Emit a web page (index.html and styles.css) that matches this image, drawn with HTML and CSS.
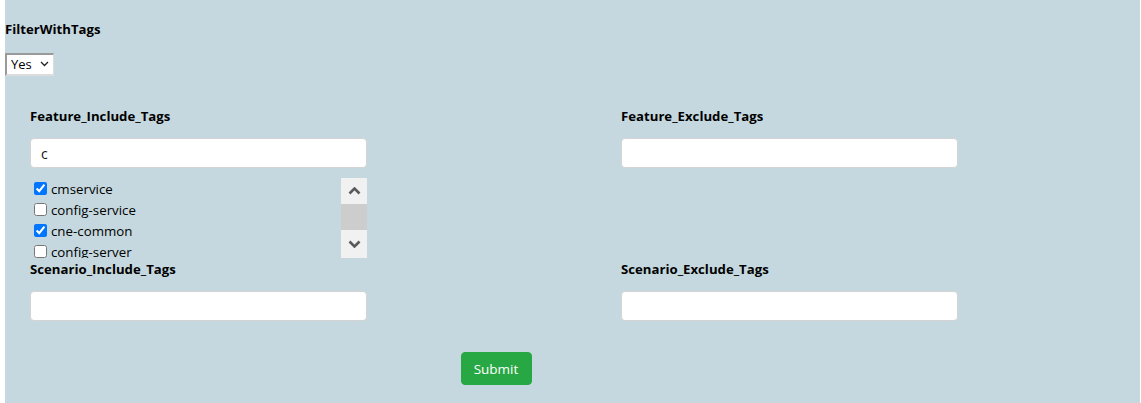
FILE: index.html
```html
<!DOCTYPE html>
<html>
<head>
<meta charset="utf-8">
<link rel="stylesheet" href="styles.css">
</head>
<body>
<div class="page">
  <div class="title">FilterWithTags</div>
  <div class="select-wrap">
    <select class="yn"><option>Yes</option><option>No</option></select>
    <svg class="sel-arrow" width="9" height="6" viewBox="0 0 9 6"><path d="M1 1 L4.5 4.5 L8 1" fill="none" stroke="#222" stroke-width="1.3"/></svg>
  </div>
  <div class="grid">
    <div class="field">
      <div class="label">Feature_Include_Tags</div>
      <input class="txt" type="text" value="c">
      <div class="listbox">
        <div class="items">
          <label class="item"><input type="checkbox" checked><span>cmservice</span></label>
          <label class="item"><input type="checkbox"><span>config-service</span></label>
          <label class="item"><input type="checkbox" checked><span>cne-common</span></label>
          <label class="item"><input type="checkbox"><span>config-server</span></label>
        </div>
        <div class="sbar">
          <div class="sbtn"><svg width="13" height="8" viewBox="0 0 13 8"><path d="M1.5 6.5 L6.5 1.5 L11.5 6.5" fill="none" stroke="#5a5a5a" stroke-width="2.6"/></svg></div>
          <div class="thumb"></div>
          <div class="sbtn down"><svg width="13" height="8" viewBox="0 0 13 8"><path d="M1.5 1.5 L6.5 6.5 L11.5 1.5" fill="none" stroke="#5a5a5a" stroke-width="2.6"/></svg></div>
        </div>
      </div>
    </div>
    <div class="field">
      <div class="label">Feature_Exclude_Tags</div>
      <input class="txt" type="text">
    </div>
    <div class="field">
      <div class="label">Scenario_Include_Tags</div>
      <input class="txt" type="text">
    </div>
    <div class="field">
      <div class="label">Scenario_Exclude_Tags</div>
      <input class="txt" type="text">
    </div>
  </div>
  <div class="actions">
    <button class="submit" type="button">Submit</button>
  </div>
</div>
</body>
</html>
```

FILE: styles.css
```css
html, body {
  margin: 0;
  padding: 0;
  background: #ffffff;
}
body {
  font-family: "Open Sans", "Noto Sans", "Liberation Sans", sans-serif;
  color: #000;
}
.page {
  margin-left: 5px;
  width: 1135px;
  background: #c5d8df;
  padding: 19px 0 18px 0;
  box-sizing: border-box;
  height: 403px;
}
.title {
  font-weight: 700;
  font-size: 13.2px;
  line-height: 20px;
}
.select-wrap {
  position: relative;
  margin-top: 13px;
  width: 49px;
  height: 23px;
}
.yn {
  appearance: none;
  -webkit-appearance: none;
  width: 49px;
  height: 23px;
  box-sizing: border-box;
  border-style: solid;
  border-width: 2px 1px 2px 2px;
  border-color: #9a9a9a #dcdcdc #dcdcdc #9a9a9a;
  background: #fff;
  font-family: "Open Sans", "Noto Sans", sans-serif;
  font-size: 13px;
  padding: 0 0 0 4px;
  color: #000;
  border-radius: 0;
  outline: none;
}
.sel-arrow {
  position: absolute;
  left: 35px;
  top: 9px;
  pointer-events: none;
}
.grid {
  display: grid;
  grid-template-columns: 591px 336px;
  padding-left: 25px;
  margin-top: 31px;
}
.field {
  display: flex;
  flex-direction: column;
}
.label {
  font-weight: 700;
  font-size: 13.2px;
  line-height: 20px;
  margin-bottom: 12px;
}
.field:nth-child(3) .label,
.field:nth-child(4) .label {
  margin-top: 1px;
}
.txt {
  width: 337px;
  height: 30px;
  box-sizing: border-box;
  border: 1px solid #d4d4d4;
  border-radius: 4px;
  background: #fff;
  padding: 0 10px;
  font-family: "Open Sans", "Noto Sans", sans-serif;
  font-size: 14px;
  color: #111;
  outline: none;
}
.listbox {
  display: flex;
  width: 337px;
  height: 80px;
  margin-top: 10px;
}
.items {
  flex: 1;
  overflow: hidden;
  display: flex;
  flex-direction: column;
  padding-left: 4px;
}
.item {
  display: flex;
  align-items: center;
  height: 21px;
  flex: 0 0 21px;
  font-size: 13.3px;
}
.item input {
  width: 13px;
  height: 13px;
  margin: 0 4px 0 0;
}
.sbar {
  width: 26px;
  background: #f1f1f1;
  display: flex;
  flex-direction: column;
}
.sbtn {
  height: 26px;
  display: flex;
  align-items: center;
  justify-content: center;
}
.sbtn.down {
  height: 28px;
}
.thumb {
  height: 26px;
  background: #cdcdcd;
}
.actions {
  width: 932px;
  margin-left: 25px;
  margin-top: 31px;
  display: flex;
  justify-content: center;
}
.submit {
  width: 71px;
  height: 33px;
  background: #28a745;
  border: 1px solid #28a745;
  border-radius: 4px;
  color: #fff;
  font-family: "Open Sans", "Noto Sans", sans-serif;
  font-size: 13.5px;
  padding: 0;
}
```
